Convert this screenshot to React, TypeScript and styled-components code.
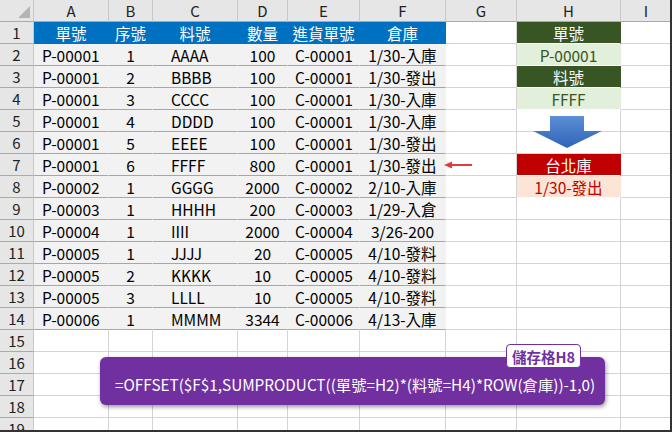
import React from "react";
import styled, { createGlobalStyle } from "styled-components";

const Global = createGlobalStyle`
  body { margin: 0; background: #fff; font-family: "Noto Sans CJK TC", "Noto Sans", sans-serif; overflow: hidden; }
`;

const cols = [34, 75, 44, 85, 50, 72, 86, 71, 104, 51];
const letters = ["A", "B", "C", "D", "E", "F", "G", "H", "I"];

const Frame = styled.div`
  position: relative;
  width: 672px;
  height: 432px;
  overflow: hidden;
  box-sizing: border-box;
  border-right: 2px solid #333;
  border-bottom: 2px solid #333;
`;
const Grid = styled.div`
  display: grid;
  grid-template-columns: ${cols.map((c) => c + "px").join(" ")};
  grid-auto-rows: 22px;
`;
type CellP = { $bg?: string; $c?: string; $align?: string; $pl?: number; $line?: string };
const Cell = styled.div<CellP>`
  box-sizing: border-box;
  display: flex;
  align-items: center;
  justify-content: ${(p) => p.$align || "center"};
  padding-left: ${(p) => p.$pl || 0}px;
  background: ${(p) => p.$bg || "#fff"};
  color: ${(p) => p.$c || "#000"};
  border-right: 1px solid #d4d4d4;
  border-bottom: 1px solid ${(p) => p.$line || "#d4d4d4"};
  font-size: 15.5px;
  white-space: nowrap;
  overflow: visible;
`;
const Head = styled(Cell)`
  background: #e6e6e6;
  color: #222;
  border-right: 1px solid #c8c8c8;
  border-bottom: 1px solid #aaa;
  font-size: 15px;
`;
const Corner = styled(Head)`
  position: relative;
  &::after {
    content: "";
    position: absolute;
    right: 3px;
    bottom: 3px;
    border-left: 12px solid transparent;
    border-bottom: 12px solid #b4b4b4;
  }
`;
const Overlay = styled.div`
  position: absolute;
  left: 100px;
  top: 357px;
  width: 505px;
  height: 48px;
  background: #7030a0;
  border-radius: 6px;
  box-shadow: 1px 2px 4px rgba(0,0,0,0.4);
  color: #fff;
  font-size: 15.3px;
  display: flex;
  align-items: center;
  padding-left: 15px;
  padding-top: 6px;
  box-sizing: border-box;
  white-space: nowrap;
`;
const Badge = styled.div`
  position: absolute;
  left: 506px;
  top: 344px;
  width: 75px;
  height: 24px;
  background: #fff;
  border: 1px solid #7030a0;
  border-radius: 4px;
  color: #7030a0;
  font-weight: bold;
  font-size: 14.5px;
  display: flex;
  align-items: center;
  justify-content: center;
  box-sizing: border-box;
`;
const Abs = styled.svg<{ $x: number; $y: number }>`
  position: absolute;
  left: ${(p) => p.$x}px;
  top: ${(p) => p.$y}px;
`;

const data = [
  ["P-00001", "1", "AAAA", "100", "C-00001", "1/30-入庫"],
  ["P-00001", "2", "BBBB", "100", "C-00001", "1/30-發出"],
  ["P-00001", "3", "CCCC", "100", "C-00001", "1/30-入庫"],
  ["P-00001", "4", "DDDD", "100", "C-00001", "1/30-入庫"],
  ["P-00001", "5", "EEEE", "100", "C-00001", "1/30-發出"],
  ["P-00001", "6", "FFFF", "800", "C-00001", "1/30-發出"],
  ["P-00002", "1", "GGGG", "2000", "C-00002", "2/10-入庫"],
  ["P-00003", "1", "HHHH", "200", "C-00003", "1/29-入倉"],
  ["P-00004", "1", "IIII", "2000", "C-00004", "3/26-200"],
  ["P-00005", "1", "JJJJ", "20", "C-00005", "4/10-發料"],
  ["P-00005", "2", "KKKK", "10", "C-00005", "4/10-發料"],
  ["P-00005", "3", "LLLL", "10", "C-00005", "4/10-發料"],
  ["P-00006", "1", "MMMM", "3344", "C-00006", "4/13-入庫"],
];
const headers = ["單號", "序號", "料號", "數量", "進貨單號", "倉庫"];
const aligns: [string, number][] = [["flex-start", 8], ["center", 0], ["flex-start", 18], ["center", 0], ["flex-start", 7], ["center", 0]];

const hCol: Record<number, { t: string; bg: string; c: string }> = {
  1: { t: "單號", bg: "#375623", c: "#fff" },
  2: { t: "P-00001", bg: "#e2efda", c: "#375623" },
  3: { t: "料號", bg: "#375623", c: "#fff" },
  4: { t: "FFFF", bg: "#e2efda", c: "#375623" },
  7: { t: "台北庫", bg: "#c00000", c: "#fff" },
  8: { t: "1/30-發出", bg: "#fce4d6", c: "#c00000" },
};

export default function App() {
  const rows: React.ReactNode[] = [];
  for (let r = 1; r <= 19; r++) {
    rows.push(<Head key={"h" + r}>{r}</Head>);
    for (let c = 0; c < 9; c++) {
      const k = r + "-" + c;
      if (c < 6 && r === 1) {
        rows.push(<Cell key={k} $bg="#0070c0" $c="#fff" $line="#0070c0" style={{ borderRightColor: "#0070c0" }}>{headers[c]}</Cell>);
      } else if (c < 6 && r <= 14) {
        rows.push(<Cell key={k} $bg="#f2f2f2" $line="#a6a6a6" $align={aligns[c][0]} $pl={aligns[c][1]} style={{ borderRightColor: "#f2f2f2" }}>{data[r - 2][c]}</Cell>);
      } else if (c === 7 && hCol[r]) {
        const h = hCol[r];
        rows.push(<Cell key={k} $bg={h.bg} $c={h.c} $line="#fff" style={{ borderRightColor: h.bg }}>{h.t}</Cell>);
      } else {
        rows.push(<Cell key={k} />);
      }
    }
  }
  return (
    <>
      <Global />
      <Frame>
        <Grid>
          <Corner />
          {letters.map((l) => <Head key={l}>{l}</Head>)}
          {rows}
        </Grid>
        <Abs $x={532} $y={114} width="72" height="36" viewBox="0 0 72 36">
          <defs>
            <linearGradient id="bl" x1="0" y1="0" x2="0" y2="1">
              <stop offset="0" stopColor="#5b8fd6" />
              <stop offset="1" stopColor="#2f63b8" />
            </linearGradient>
          </defs>
          <path d="M18 2 H52 V17 H70 L35 34 L1 17 H18 Z" fill="url(#bl)" />
        </Abs>
        <Abs $x={443} $y={160} width="30" height="10" viewBox="0 0 30 10">
          <line x1="8" y1="5" x2="29" y2="5" stroke="#e03c3c" strokeWidth="2" />
          <path d="M1 5 L9 1.5 L9 8.5 Z" fill="#e03c3c" />
        </Abs>
        <Overlay>=OFFSET($F$1,SUMPRODUCT((單號=H2)*(料號=H4)*ROW(倉庫))-1,0)</Overlay>
        <Badge>儲存格H8</Badge>
      </Frame>
    </>
  );
}
